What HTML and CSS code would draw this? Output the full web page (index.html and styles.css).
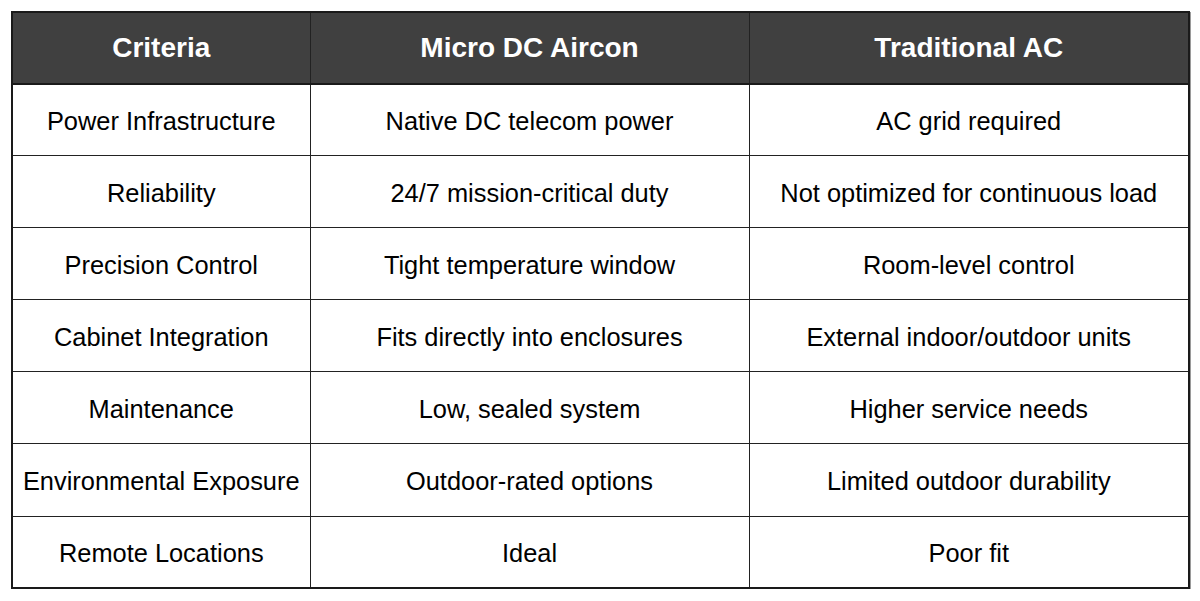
FILE: index.html
```html
<!DOCTYPE html>
<html>
<head>
<meta charset="utf-8">
<link rel="stylesheet" href="styles.css">
</head>
<body>
<table class="cmp">
  <colgroup><col class="c1"><col class="c2"><col class="c3"></colgroup>
  <thead>
    <tr><th>Criteria</th><th>Micro DC Aircon</th><th>Traditional AC</th></tr>
  </thead>
  <tbody>
    <tr><td>Power Infrastructure</td><td>Native DC telecom power</td><td>AC grid required</td></tr>
    <tr><td>Reliability</td><td>24/7 mission-critical duty</td><td>Not optimized for continuous load</td></tr>
    <tr><td>Precision Control</td><td>Tight temperature window</td><td>Room-level control</td></tr>
    <tr><td>Cabinet Integration</td><td>Fits directly into enclosures</td><td>External indoor/outdoor units</td></tr>
    <tr><td>Maintenance</td><td>Low, sealed system</td><td>Higher service needs</td></tr>
    <tr><td>Environmental Exposure</td><td>Outdoor-rated options</td><td>Limited outdoor durability</td></tr>
    <tr><td>Remote Locations</td><td>Ideal</td><td>Poor fit</td></tr>
  </tbody>
</table>
</body>
</html>
```
FILE: styles.css
```css
html, body {
  margin: 0;
  background: #ffffff;
}
body {
  padding: 11px 0 0 11px;
  font-family: "Liberation Sans", Arial, sans-serif;
}
.cmp {
  border-collapse: collapse;
  width: 1177px;
  table-layout: fixed;
  border: 2px solid #1a1a1a;
  box-shadow: 1px 1px 0 #9a9a9a;
}
.c1 { width: 298px; }
.c2 { width: 439px; }
.c3 { width: 440px; }
.cmp th, .cmp td {
  box-sizing: border-box;
  border: 1px solid #222222;
  text-align: center;
  vertical-align: middle;
  height: 72.1px;
  padding: 0;
  line-height: 30px;
  font-size: 25.4px;
}
.cmp th {
  background: #404040;
  color: #ffffff;
  font-weight: bold;
  font-size: 28px;
  height: 71.5px;
  border-bottom: 2px solid #1a1a1a;
}
.cmp td {
  color: #000000;
  padding-top: 2px;
}
```
